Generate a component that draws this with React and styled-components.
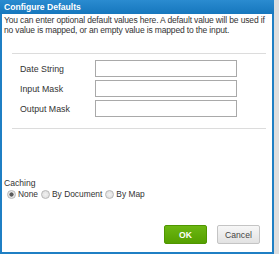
import React, { useState } from "react";
import styled, { createGlobalStyle } from "styled-components";

const Global = createGlobalStyle`
  html, body { margin: 0; padding: 0; background: #dedede; }
  body { font-family: "Liberation Sans", Arial, sans-serif; }
`;

const Dialog = styled.div`
  width: 274px;
  height: 254px;
  box-sizing: border-box;
  background: #fff;
  border: 2px solid #1f7fc4;
  border-top: none;
  display: flex;
  flex-direction: column;
`;

const TitleBar = styled.div`
  height: 14px;
  margin: 0 -2px;
  padding: 0 4px;
  background: linear-gradient(#2a8bd0, #1677bd);
  color: #fff;
  font-size: 8.6px;
  font-weight: bold;
  line-height: 14px;
`;

const Body = styled.div`
  flex: 1;
  display: flex;
  flex-direction: column;
  padding: 1px 2px 0 2px;
`;

const Intro = styled.p`
  margin: 0;
  font-size: 8.5px;
  letter-spacing: -0.15px;
  line-height: 10px;
  color: #333;
`;

const Rule = styled.hr`
  border: none;
  border-top: 1px solid #dcdcdc;
  margin: ${(p) => p.$top}px 4px 0 8px;
`;

const Fields = styled.div`
  display: grid;
  grid-template-columns: 75px 142px;
  row-gap: 3px;
  align-items: center;
  padding: 6px 0 0 16px;
`;

const Label = styled.label`
  font-size: 8.8px;
  color: #333;
`;

const Input = styled.input`
  width: 142px;
  height: 17px;
  box-sizing: border-box;
  border: 1px solid #a9a9a9;
  margin: 0;
  padding: 0 3px;
`;

const Caching = styled.div`
  margin-top: 49px;
  font-size: 8.6px;
  line-height: 10px;
  color: #333;
`;

const Radios = styled.div`
  display: flex;
  align-items: center;
  gap: 3px;
  margin-top: 1px;
  padding-left: 3px;
  height: 10px;
`;

const RadioItem = styled.label`
  display: flex;
  align-items: center;
  gap: 2px;
  font-size: 8.4px;
  color: #333;
`;

const Dot = styled.span`
  width: 9px;
  height: 9px;
  box-sizing: border-box;
  border-radius: 50%;
  border: 1px solid #b8b8b8;
  background: ${(p) =>
    p.$on
      ? "radial-gradient(circle, #5a5a5a 0 1.8px, #e6e6e6 2.4px)"
      : "radial-gradient(circle, #f2f2f2 0, #dadada 100%)"};
`;

const Footer = styled.div`
  display: flex;
  justify-content: flex-end;
  gap: 10px;
  margin-top: auto;
  padding: 0 10px 8px 0;
`;

const Button = styled.button`
  height: 19px;
  width: ${(p) => p.$w}px;
  font-family: inherit;
  font-size: 8.6px;
  border-radius: 2px;
  padding: 0;
  border: 1px solid ${(p) => (p.$primary ? "#4f9600" : "#c4c4c4")};
  background: ${(p) =>
    p.$primary ? "linear-gradient(#6cb712, #55a000)" : "linear-gradient(#f7f7f7, #e2e2e2)"};
  color: ${(p) => (p.$primary ? "#fff" : "#444")};
  font-weight: ${(p) => (p.$primary ? "bold" : "normal")};
`;

const options = ["None", "By Document", "By Map"];

export default function App() {
  const [mode, setMode] = useState("None");
  return (
    <>
      <Global />
      <Dialog>
        <TitleBar>Configure Defaults</TitleBar>
        <Body>
          <Intro>
            You can enter optional default values here. A default value will be used if no value is
            mapped, or an empty value is mapped to the input.
          </Intro>
          <Rule $top={18} />
          <Fields>
            <Label>Date String</Label>
            <Input />
            <Label>Input Mask</Label>
            <Input />
            <Label>Output Mask</Label>
            <Input />
          </Fields>
          <Rule $top={11} />
          <Caching>Caching</Caching>
          <Radios>
            {options.map((o) => (
              <RadioItem key={o} onClick={() => setMode(o)}>
                <Dot $on={mode === o} />
                {o}
              </RadioItem>
            ))}
          </Radios>
          <Footer>
            <Button $primary $w={43}>OK</Button>
            <Button $w={43}>Cancel</Button>
          </Footer>
        </Body>
      </Dialog>
    </>
  );
}
